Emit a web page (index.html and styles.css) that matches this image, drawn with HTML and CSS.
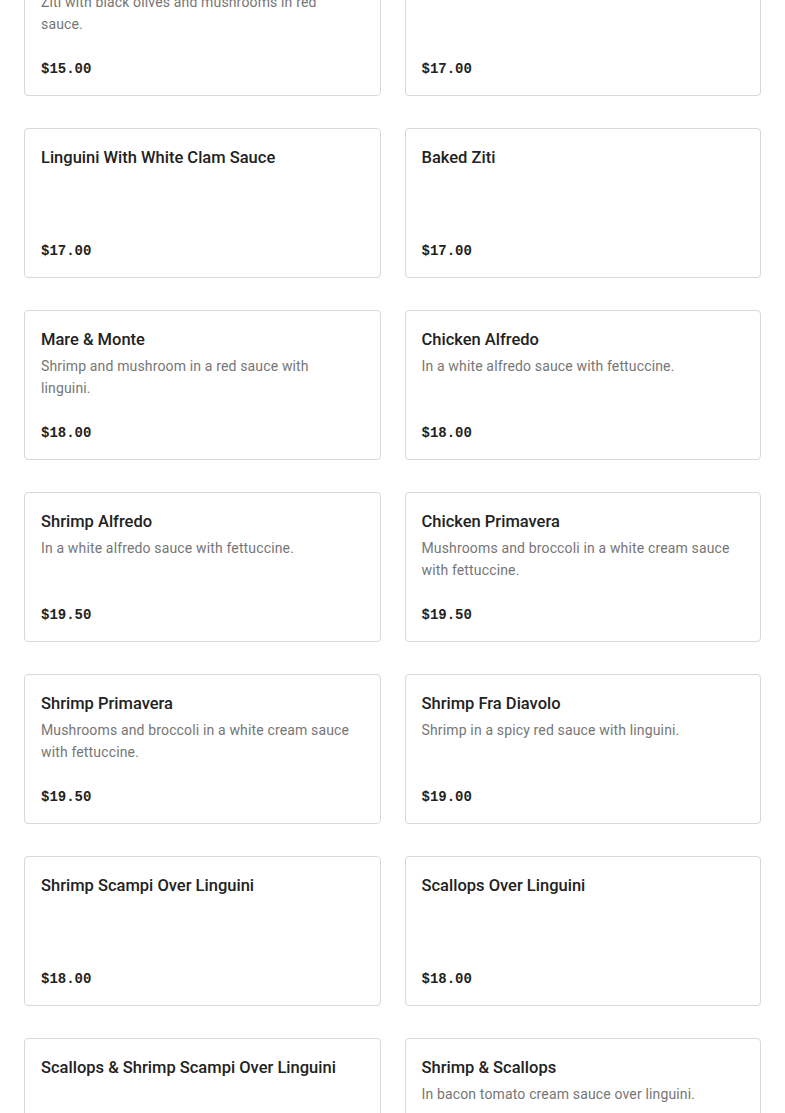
FILE: index.html
```html
<!DOCTYPE html>
<html>
<head>
<meta charset="utf-8">
<link rel="stylesheet" href="styles.css">
</head>
<body>
<main class="menu">
  <div class="card"><h3 class="title">Baked Ziti With Olives</h3><p class="desc">Ziti with black olives and mushrooms in red sauce.</p><div class="price">$15.00</div></div>
  <div class="card"><h3 class="title">Linguini With Red Clam Sauce</h3><p class="desc"></p><div class="price">$17.00</div></div>
  <div class="card"><h3 class="title">Linguini With White Clam Sauce</h3><p class="desc"></p><div class="price">$17.00</div></div>
  <div class="card"><h3 class="title">Baked Ziti</h3><p class="desc"></p><div class="price">$17.00</div></div>
  <div class="card"><h3 class="title">Mare &amp; Monte</h3><p class="desc">Shrimp and mushroom in a red sauce with linguini.</p><div class="price">$18.00</div></div>
  <div class="card"><h3 class="title">Chicken Alfredo</h3><p class="desc">In a white alfredo sauce with fettuccine.</p><div class="price">$18.00</div></div>
  <div class="card"><h3 class="title">Shrimp Alfredo</h3><p class="desc">In a white alfredo sauce with fettuccine.</p><div class="price">$19.50</div></div>
  <div class="card"><h3 class="title">Chicken Primavera</h3><p class="desc">Mushrooms and broccoli in a white cream sauce with fettuccine.</p><div class="price">$19.50</div></div>
  <div class="card"><h3 class="title">Shrimp Primavera</h3><p class="desc">Mushrooms and broccoli in a white cream sauce with fettuccine.</p><div class="price">$19.50</div></div>
  <div class="card"><h3 class="title">Shrimp Fra Diavolo</h3><p class="desc">Shrimp in a spicy red sauce with linguini.</p><div class="price">$19.00</div></div>
  <div class="card"><h3 class="title">Shrimp Scampi Over Linguini</h3><p class="desc"></p><div class="price">$18.00</div></div>
  <div class="card"><h3 class="title">Scallops Over Linguini</h3><p class="desc"></p><div class="price">$18.00</div></div>
  <div class="card"><h3 class="title">Scallops &amp; Shrimp Scampi Over Linguini</h3><p class="desc"></p><div class="price">$19.00</div></div>
  <div class="card"><h3 class="title">Shrimp &amp; Scallops</h3><p class="desc">In bacon tomato cream sauce over linguini.</p><div class="price">$20.00</div></div>
</main>
</body>
</html>
```
FILE: styles.css
```css
html, body {
  margin: 0;
  padding: 0;
  background: #fff;
  overflow: hidden;
}
body {
  font-family: "Roboto", "Liberation Sans", Arial, sans-serif;
  color: #222;
}
.menu {
  display: grid;
  grid-template-columns: 1fr 1fr;
  column-gap: 24px;
  row-gap: 32px;
  padding: 0 24px;
  margin-top: -54px;
}
.card {
  box-sizing: border-box;
  height: 150px;
  border: 1px solid #d9d9d9;
  border-radius: 4px;
  padding: 17px 16px 15px;
  display: flex;
  flex-direction: column;
}
.title {
  margin: 0;
  font-size: 16.5px;
  line-height: 24px;
  font-weight: 500;
  color: #222;
}
.desc {
  margin: 3px 0 0;
  padding-right: 8px;
  font-size: 14px;
  line-height: 22px;
  letter-spacing: 0.15px;
  color: #767676;
}
.price {
  margin-top: auto;
  font-family: "Liberation Mono", "DejaVu Sans Mono", monospace;
  font-weight: bold;
  font-size: 14px;
  line-height: 22px;
  color: #222;
}
```
